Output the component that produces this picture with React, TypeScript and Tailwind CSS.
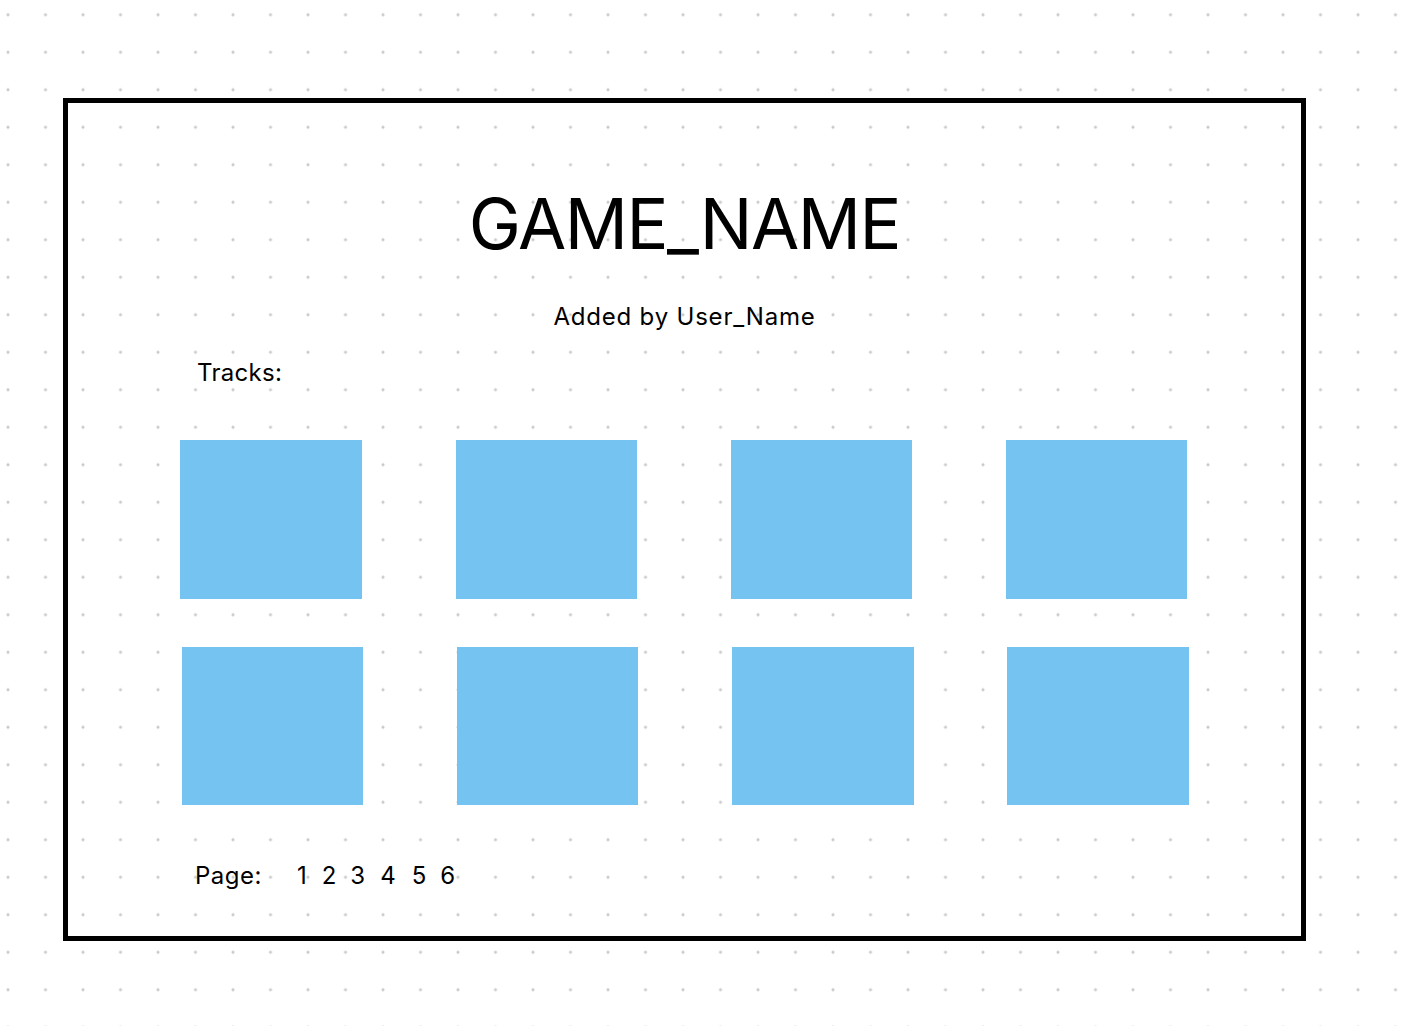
import React from "react";

const rows = [
  { pl: "pl-[112px]", boxes: ["w-[182px]", "ml-[94px] w-[181px]", "ml-[94px] w-[181px]", "ml-[94px] w-[181px]"] },
  { pl: "pl-[114px]", boxes: ["w-[181px]", "ml-[94px] w-[181px]", "ml-[94px] w-[182px]", "ml-[93px] w-[182px]"] },
];

const pages = [
  { n: "1", cls: "ml-[35px]" },
  { n: "2", cls: "ml-[15px]" },
  { n: "3", cls: "ml-[14px]" },
  { n: "4", cls: "ml-[15px]" },
  { n: "5", cls: "ml-[16px]" },
  { n: "6", cls: "ml-[14px]" },
];

export default function App() {
  return (
    <div className="h-[1026px] w-full overflow-hidden bg-white bg-[radial-gradient(circle,#c9c9c9_1.2px,transparent_1.8px)] bg-[length:37.5px_37.5px] bg-[position:-10.75px_-4px] pt-[98px] pl-[63px] font-['Inter','Liberation_Sans',sans-serif] text-black">
      <div className="h-[843px] w-[1243px] border-[5px] border-black">
        <h1 className="mt-[86px] text-center text-[70px] font-normal leading-none tracking-[-1.5px]">
          GAME_NAME
        </h1>
        <p className="mt-[46px] text-center text-[24px] leading-none tracking-[0.8px]">
          Added by User_Name
        </p>
        <p className="mt-[32px] pl-[129px] text-[24px] leading-none tracking-[0.3px]">Tracks:</p>

        <div className="mt-[55px]">
          {rows.map((row, i) => (
            <div
              key={i}
              className={`flex ${row.pl} ${i === 0 ? "h-[159px]" : "mt-[48px] h-[158px]"}`}
            >
              {row.boxes.map((b, j) => (
                <div key={j} className={`h-full bg-[#75c3f0] ${b}`} />
              ))}
            </div>
          ))}
        </div>

        <div className="mt-[59px] flex pl-[127px] text-[24px] leading-none">
          <span className="tracking-[0.5px]">Page:</span>
          {pages.map((p) => (
            <span key={p.n} className={p.cls}>
              {p.n}
            </span>
          ))}
        </div>
      </div>
    </div>
  );
}
